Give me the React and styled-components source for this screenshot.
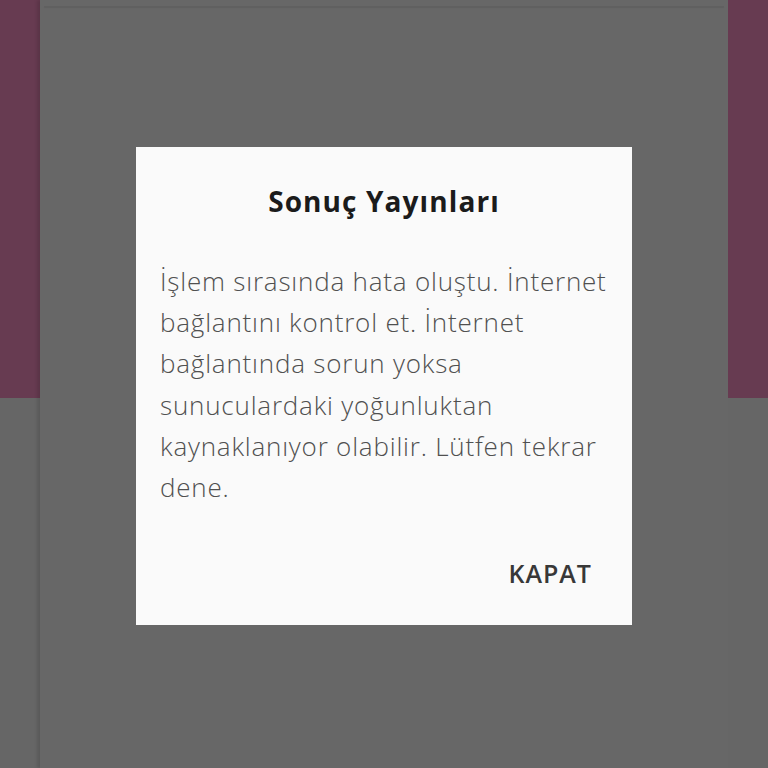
import React from "react";
import styled, { createGlobalStyle } from "styled-components";

const Global = createGlobalStyle`
  html, body { margin: 0; padding: 0; }
  body {
    width: 768px;
    height: 768px;
    overflow: hidden;
    font-family: "Open Sans", "Noto Sans", sans-serif;
  }
`;

const Screen = styled.div`
  position: relative;
  width: 768px;
  height: 768px;
  display: grid;
  grid-template-columns: 40px 1fr 40px;
  grid-template-rows: 398px 1fr;
  background: #666666;
`;

const Side = styled.div`
  background: ${(p) => (p.$tint ? "#673b51" : "#666666")};
  grid-column: ${(p) => p.$col};
  grid-row: ${(p) => p.$row};
`;

const Column = styled.div`
  grid-column: 2;
  grid-row: 1 / span 2;
  background: #676767;
  box-shadow: -3px 0 3px rgba(0, 0, 0, 0.12), 3px 0 3px rgba(0, 0, 0, 0.12);
  padding-top: 6px;
  display: flex;
  flex-direction: column;
`;

const ColumnEdge = styled.div`
  height: 1px;
  margin: 0 4px;
  background: #606060;
  box-shadow: 0 1px 1px rgba(0, 0, 0, 0.08);
`;

const Overlay = styled.div`
  position: absolute;
  inset: 0;
  display: flex;
  align-items: flex-start;
  justify-content: center;
  padding-top: 147px;
`;

const Dialog = styled.div`
  width: 496px;
  height: 478px;
  box-sizing: border-box;
  background: #fafafa;
  padding: 35px 14px 0 24px;
  display: flex;
  flex-direction: column;
`;

const Title = styled.h2`
  margin: 0 0 0 -10px;
  text-align: center;
  font-size: 28px;
  font-weight: 700;
  letter-spacing: 1.1px;
  color: #1b1b1b;
  line-height: 38px;
`;

const Message = styled.p`
  margin: 41px 0 0 0;
  font-size: 26px;
  font-weight: 300;
  line-height: 41.2px;
  letter-spacing: 0.8px;
  color: #505050;
`;

const Actions = styled.div`
  margin-top: auto;
  display: flex;
  justify-content: flex-end;
  padding: 0 26px 37px 0;
`;

const ActionButton = styled.button`
  border: none;
  background: transparent;
  padding: 0;
  font-family: inherit;
  font-size: 25px;
  font-weight: 600;
  color: #383838;
  letter-spacing: 1px;
  line-height: 30px;
  cursor: pointer;
`;

export default function App() {
  return (
    <>
      <Global />
      <Screen>
        <Side $tint $col={1} $row={1} />
        <Side $col={1} $row={2} />
        <Column>
          <ColumnEdge />
        </Column>
        <Side $tint $col={3} $row={1} />
        <Side $col={3} $row={2} />
        <Overlay>
          <Dialog role="dialog">
            <Title>Sonuç Yayınları</Title>
            <Message>
              İşlem sırasında hata oluştu. İnternet bağlantını kontrol et. İnternet
              bağlantında sorun yoksa sunuculardaki yoğunluktan kaynaklanıyor
              olabilir. Lütfen tekrar dene.
            </Message>
            <Actions>
              <ActionButton>KAPAT</ActionButton>
            </Actions>
          </Dialog>
        </Overlay>
      </Screen>
    </>
  );
}
